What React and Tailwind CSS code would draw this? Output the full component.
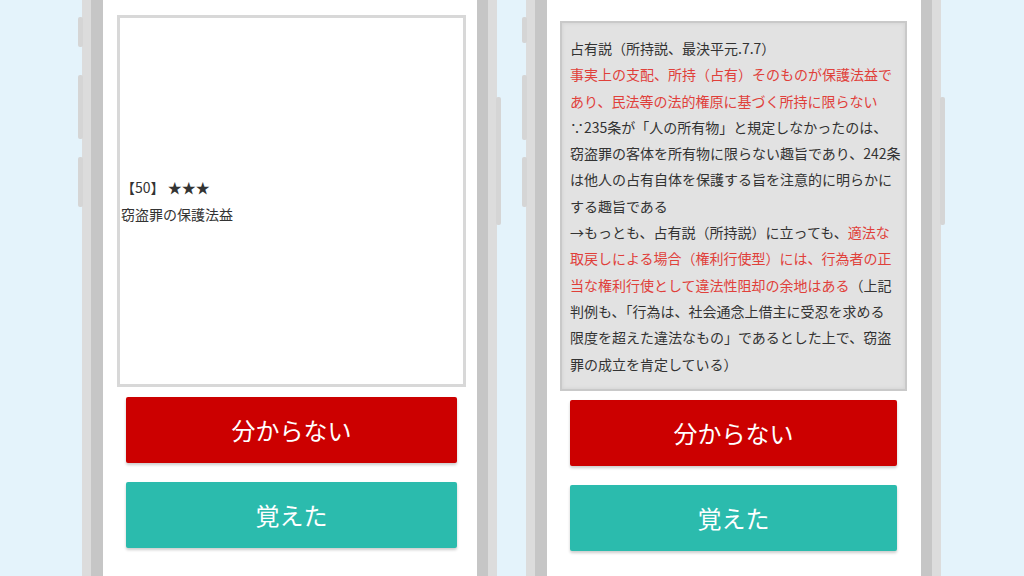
import React from 'react';

const font = { fontFamily: '"Noto Sans CJK JP", "Noto Sans", sans-serif' };

// Side bumps on the phone frame
const Bump = ({ className }) => (
  <div className={`absolute w-[5px] rounded-[2px] bg-[#d5d5d5] ${className}`} />
);

function Phone({ children, side }) {
  return (
    <div className="relative h-full w-[415px] flex bg-[#dcdcdc] px-[9px]">
      {side === 'left' ? (
        <>
          <Bump className="left-[-4px] top-[17px] h-[30px]" />
          <Bump className="left-[-4px] top-[75px] h-[64px]" />
          <Bump className="left-[-4px] top-[157px] h-[50px]" />
          <Bump className="right-[-4px] top-[97px] h-[128px]" />
        </>
      ) : (
        <>
          <Bump className="left-[-4px] top-[17px] h-[26px]" />
          <Bump className="left-[-4px] top-[75px] h-[65px]" />
          <Bump className="left-[-4px] top-[157px] h-[50px]" />
          <Bump className="right-[-4px] top-[97px] h-[128px]" />
        </>
      )}
      <div className="flex-1 flex bg-[#c6c6c6] pl-[12px] pr-[11px]">
        <div className="flex-1 bg-white flex flex-col">{children}</div>
      </div>
    </div>
  );
}

const ActionButtons = ({ mx }) => (
  <div className={`flex flex-col gap-[19px] ${mx}`}>
    <button className="h-[66px] rounded-[2px] bg-[#cc0000] text-white text-[24px] shadow-[0_2px_3px_rgba(0,0,0,0.2)]">
      分からない
    </button>
    <button className="h-[66px] rounded-[2px] bg-[#2bbbad] text-white text-[24px] shadow-[0_2px_3px_rgba(0,0,0,0.2)]">
      覚えた
    </button>
  </div>
);

const Red = ({ children }) => <span className="text-[#e0403a]">{children}</span>;

export default function App() {
  return (
    <div
      className="w-[1024px] h-[576px] overflow-hidden bg-[#e4f3fb] flex pl-[82px] gap-[29px]"
      style={font}
    >
      {/* Question side */}
      <Phone side="left">
        <div className="mt-[15px] ml-[14px] mr-[11px] h-[372px] border-[3px] border-[#d8d8d8] flex items-center pl-[1px]">
          <div className="text-[14px] leading-[27px] text-[#333]">
            <div>【50】 ★★★</div>
            <div>窃盗罪の保護法益</div>
          </div>
        </div>
        <div className="mt-[10px]">
          <ActionButtons mx="ml-[23px] mr-[20px]" />
        </div>
      </Phone>

      {/* Answer side */}
      <Phone side="right">
        <div className="mt-[21px] ml-[13px] mr-[14px] h-[370px] border-2 border-[#c9c9c9] bg-[#e2e2e2] shadow-[inset_0_0_4px_rgba(0,0,0,0.08)] pl-[8px] pt-[12px]">
          <p className="text-[14px] leading-[26.3px] text-[#333] whitespace-nowrap">
            占有説（所持説、最決平元.7.7）<br />
            <Red>
              事実上の支配、所持（占有）そのものが保護法益で<br />
              あり、民法等の法的権原に基づく所持に限らない
            </Red>
            <br />
            ∵235条が「人の所有物」と規定しなかったのは、<br />
            窃盗罪の客体を所有物に限らない趣旨であり、242条<br />
            は他人の占有自体を保護する旨を注意的に明らかに<br />
            する趣旨である<br />
            →もっとも、占有説（所持説）に立っても、<Red>適法な</Red>
            <br />
            <Red>
              取戻しによる場合（権利行使型）には、行為者の正<br />
              当な権利行使として違法性阻却の余地はある
            </Red>
            （上記<br />
            判例も、「行為は、社会通念上借主に受忍を求める<br />
            限度を超えた違法なもの」であるとした上で、窃盗<br />
            罪の成立を肯定している）
          </p>
        </div>
        <div className="mt-[9px]">
          <ActionButtons mx="ml-[23px] mr-[24px]" />
        </div>
      </Phone>
    </div>
  );
}
